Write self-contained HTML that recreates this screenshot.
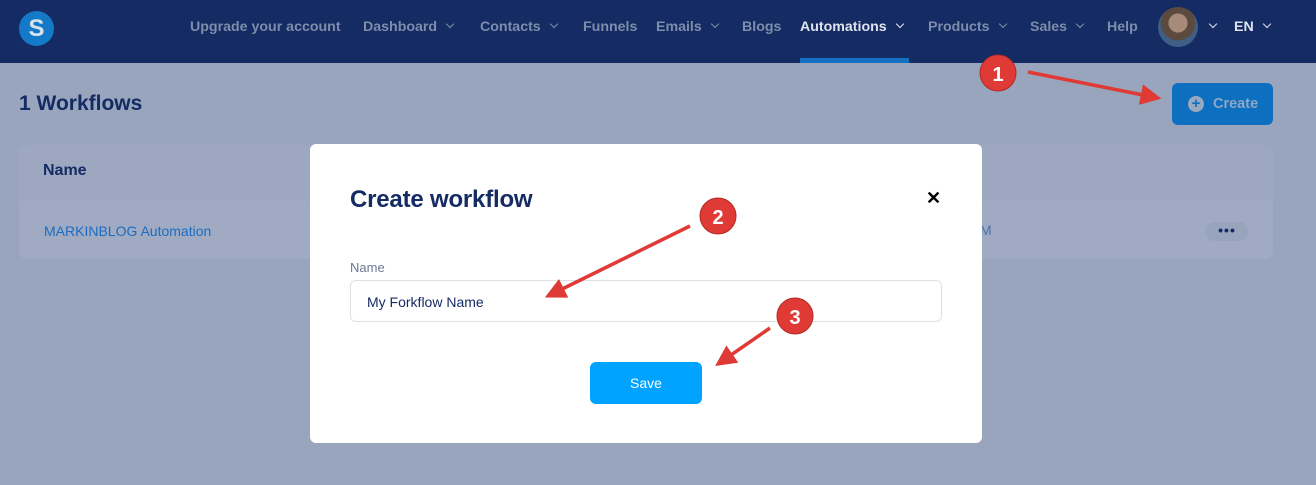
<!DOCTYPE html>
<html><head><meta charset="utf-8"><style>
*{margin:0;padding:0;box-sizing:border-box}
body{width:1316px;height:485px;overflow:hidden;background:#98a5bd;font-family:"Liberation Sans",sans-serif;position:relative}
.nav{position:absolute;left:0;top:0;width:1316px;height:63px;background:#142b63}
.logo{position:absolute;left:19px;top:11px;width:35px;height:35px;border-radius:50%;background:#1479c6;color:#d7e3ef;font-weight:bold;font-size:24px;text-align:center;line-height:35px}
.ni{position:absolute;top:19px;font-size:14.2px;font-weight:bold;color:#7d8daa;white-space:nowrap}
.ch{display:inline-block;width:6px;height:6px;border-right:1.5px solid #7d8daa;border-bottom:1.5px solid #7d8daa;transform:rotate(45deg);margin-left:10px;position:relative;top:-4px}
.act{color:#dfe4ec}
.bar{position:absolute;left:800px;top:58px;width:109px;height:5px;background:#1471c1}
.av{position:absolute;left:1158px;top:7px;width:40px;height:40px;border-radius:50%;background:radial-gradient(circle at 50% 40%,#a88a7a 0 30%,#5d4a3e 31% 55%,#3f5f86 56%)}
h1{position:absolute;left:19px;top:92px;font-size:21px;color:#142b63;font-weight:bold}
.create{position:absolute;left:1172px;top:83px;width:101px;height:42px;border-radius:6px;background:#0c6fbf;color:#8fa6c4;font-size:14.5px;font-weight:bold;line-height:42px;padding-left:41px}
.create:before{content:"+";position:absolute;left:16px;top:13px;width:16px;height:16px;border-radius:50%;background:#98a8c0;color:#0c6fbf;font-size:15px;line-height:16px;text-align:center}
.card{position:absolute;left:19px;top:145px;width:1254px;height:114px;border-radius:8px;background:#9da8c0}
.row{position:absolute;left:0;top:56px;width:100%;height:58px;background:#a0abc3;border-radius:0 0 8px 8px}
.th{position:absolute;left:24px;top:17px;font-size:16px;font-weight:bold;color:#142b63}
.link{position:absolute;left:25px;top:78px;font-size:14px;color:#1b6cc2}
.dots{position:absolute;left:1206px;top:222px;width:42px;height:19px;border-radius:8px;background:#97a4bc;color:#142b63;text-align:center;font-size:14px;line-height:16px;letter-spacing:1px;font-weight:bold}
.modal{position:absolute;left:310px;top:144px;width:672px;height:299px;background:#fff;border-radius:6px}
.mt{position:absolute;left:40px;top:42px;font-size:24px;color:#142b63;font-weight:bold;letter-spacing:-0.2px}
.x{position:absolute;left:616px;top:44px;font-size:18px;font-weight:bold;color:#000}
.lbl{position:absolute;left:40px;top:116px;font-size:13px;color:#6c7893}
.inp{position:absolute;left:40px;top:136px;width:592px;height:42px;border:1px solid #dcdfe5;border-radius:6px;font-size:14px;color:#142b63;line-height:42px;padding-left:16px}
.save{position:absolute;left:280px;top:218px;width:112px;height:42px;border-radius:6px;background:#00a3ff;color:#fff;font-size:14px;text-align:center;line-height:42px}
svg{position:absolute;left:0;top:0}
</style></head><body>
<div class="nav">
<div class="logo">S</div>
<div class="ni" style="left:190px">Upgrade your account</div>
<div class="ni" style="left:363px">Dashboard<span class="ch"></span></div>
<div class="ni" style="left:480px">Contacts<span class="ch"></span></div>
<div class="ni" style="left:583px">Funnels</div>
<div class="ni" style="left:656px">Emails<span class="ch"></span></div>
<div class="ni" style="left:742px">Blogs</div>
<div class="ni act" style="left:800px">Automations<span class="ch" style="border-color:#dfe4ec"></span></div>
<div class="ni" style="left:928px">Products<span class="ch"></span></div>
<div class="ni" style="left:1030px">Sales<span class="ch"></span></div>
<div class="ni" style="left:1107px">Help</div>
<div class="av"></div>
<div class="ni" style="left:1200px"><span class="ch" style="border-color:#dfe4ec"></span></div>
<div class="ni act" style="left:1234px">EN<span class="ch" style="border-color:#dfe4ec"></span></div>
<div class="bar"></div>
</div>
<h1>1 Workflows</h1>
<div class="create">Create</div>
<div class="card"><div class="row"></div><div class="th">Name</div><div class="link">MARKINBLOG Automation</div></div>
<div class="ni" style="left:980px;top:222px;font-weight:normal;font-size:14px;color:#4d72ad">M</div>
<div class="dots">•••</div>
<div class="modal">
<div class="mt">Create workflow</div>
<div class="x">✕</div>
<div class="lbl">Name</div>
<div class="inp">My Forkflow Name</div>
<div class="save">Save</div>
</div>
<svg width="1316" height="485">
<defs><marker id="a" markerWidth="6" markerHeight="6" refX="5" refY="3" orient="auto"><path d="M0,0 L6,3 L0,6z" fill="#e03a36"/></marker></defs>
<g stroke="#e03a36" stroke-width="3.5" fill="none" marker-end="url(#a)">
<line x1="1028" y1="72" x2="1158" y2="98"/>
<line x1="690" y1="226" x2="548" y2="296"/>
<line x1="770" y1="328" x2="718" y2="364"/>
</g>
<g font-family="Liberation Sans" font-weight="bold" font-size="20" fill="#fff" text-anchor="middle">
<circle cx="998" cy="73" r="18" fill="#e03a36" stroke="#b02a26"/><text x="998" y="81">1</text>
<circle cx="718" cy="216" r="18" fill="#e03a36" stroke="#b02a26"/><text x="718" y="224">2</text>
<circle cx="795" cy="316" r="18" fill="#e03a36" stroke="#b02a26"/><text x="795" y="324">3</text>
</g>
</svg>
</body></html>
